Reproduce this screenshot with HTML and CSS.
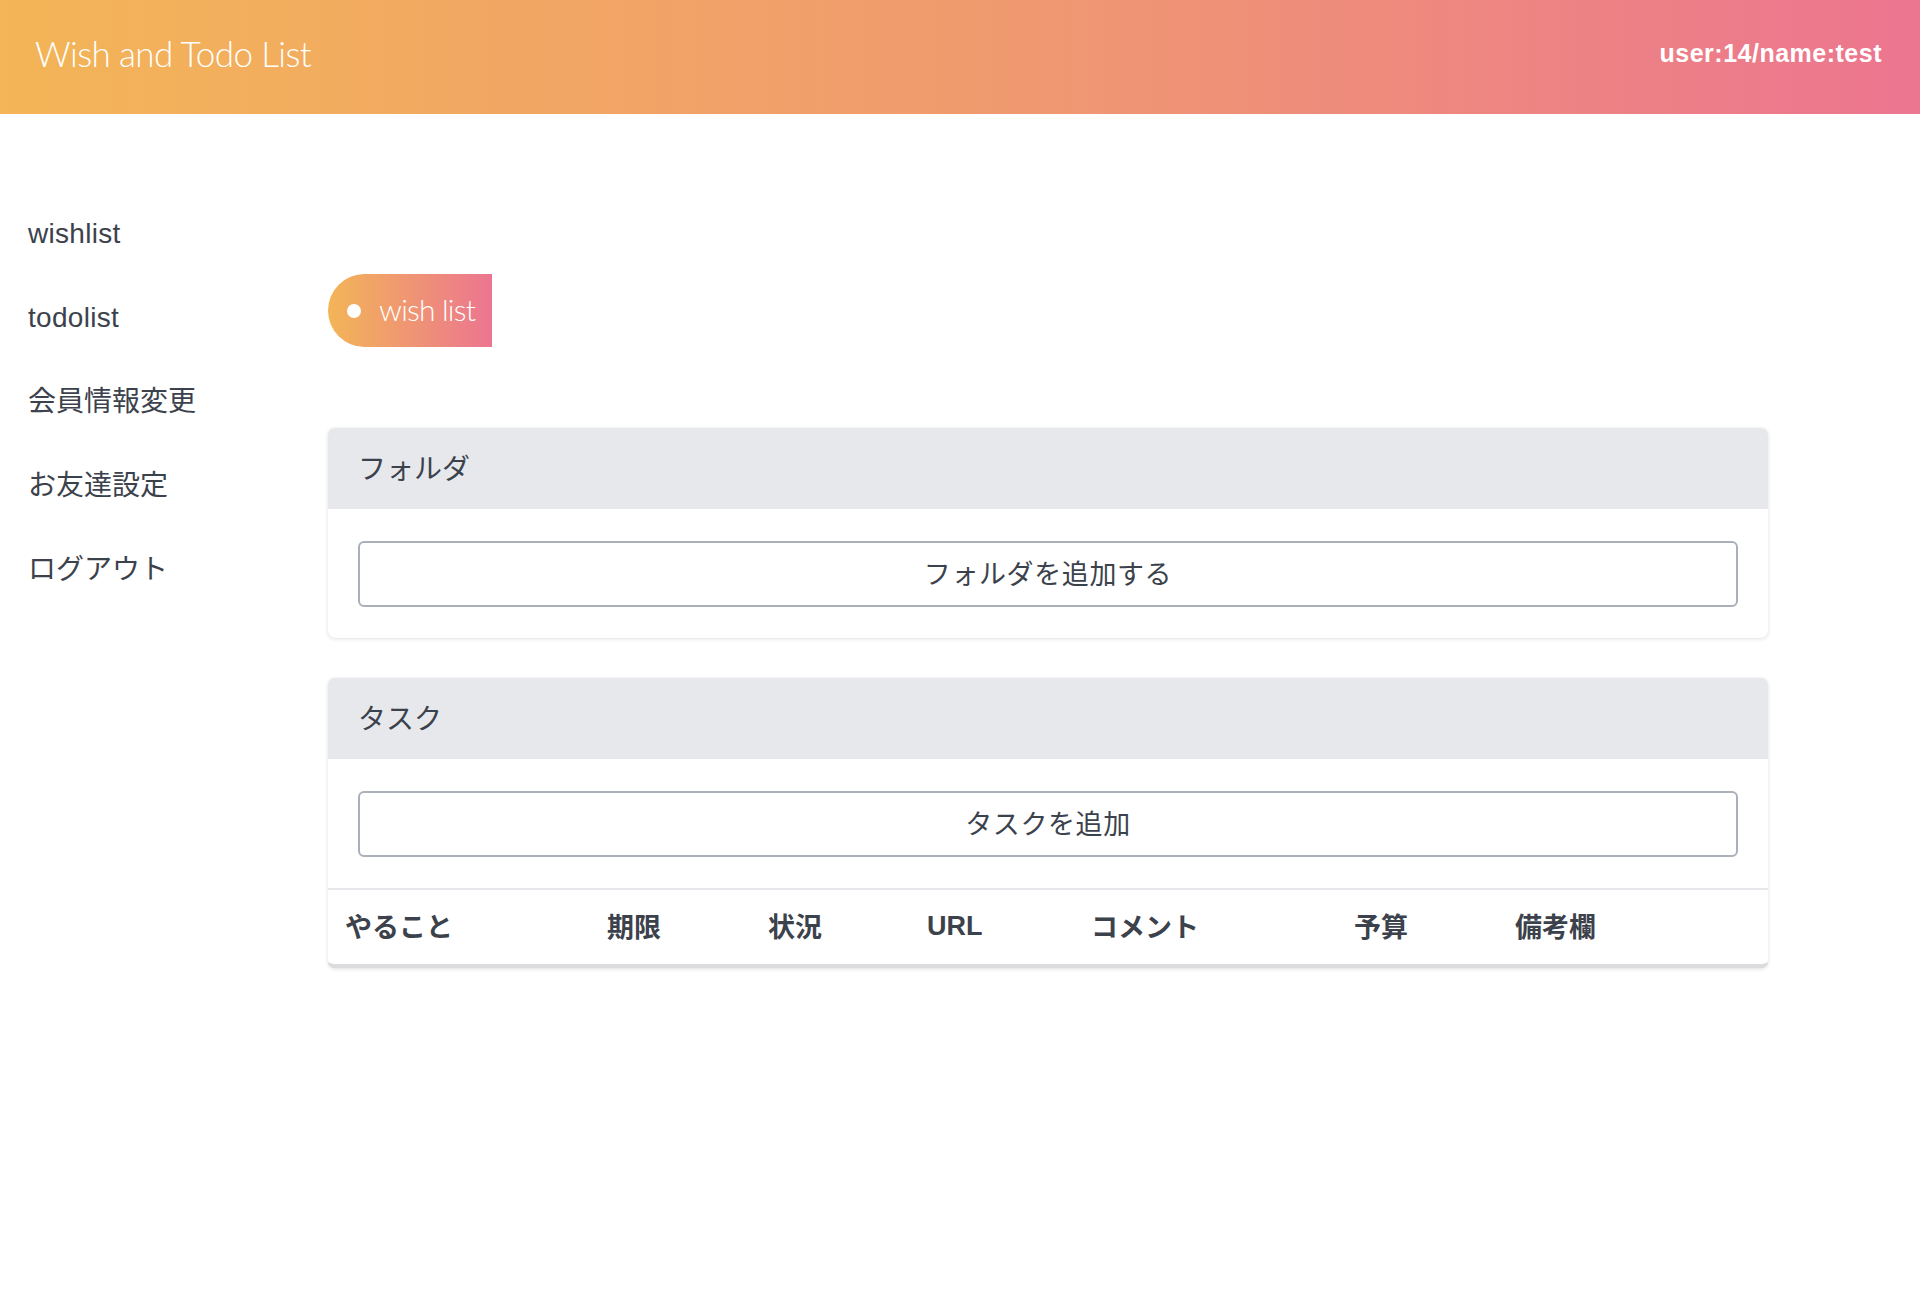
FILE: index.html
```html
<!DOCTYPE html>
<html lang="ja">
<head>
<meta charset="utf-8">
<title>Wish and Todo List</title>
<link rel="stylesheet" href="styles.css">
</head>
<body>
<header class="topbar">
  <div class="brand">Wish and Todo List</div>
  <div class="user">user:14/name:test</div>
</header>
<div class="layout">
  <nav class="sidebar">
    <a class="nav-item nav-latin" href="#">wishlist</a>
    <a class="nav-item nav-latin" href="#">todolist</a>
    <a class="nav-item" href="#">会員情報変更</a>
    <a class="nav-item" href="#">お友達設定</a>
    <a class="nav-item" href="#">ログアウト</a>
  </nav>
  <main class="content">
    <div class="pill"><span class="dot"></span><span class="pill-text">wish list</span></div>
    <section class="card card-folder">
      <div class="card-header">フォルダ</div>
      <div class="card-body">
        <button class="add-btn">フォルダを追加する</button>
      </div>
    </section>
    <section class="card card-task">
      <div class="card-header">タスク</div>
      <div class="card-body">
        <button class="add-btn">タスクを追加</button>
      </div>
      <table class="task-table">
        <thead>
          <tr>
            <th class="c1">やること</th>
            <th class="c2">期限</th>
            <th class="c3">状況</th>
            <th class="c4"><span class="latin-cell">URL</span></th>
            <th class="c5">コメント</th>
            <th class="c6">予算</th>
            <th class="c7">備考欄</th>
          </tr>
        </thead>
      </table>
    </section>
  </main>
</div>
</body>
</html>
```

FILE: styles.css
```css
* { box-sizing: border-box; }
html, body { margin: 0; padding: 0; background: #fff; }
body {
  font-family: "Liberation Sans", "Noto Sans CJK JP", sans-serif;
  color: #3c424c;
  width: 1920px;
  min-height: 1304px;
}
.topbar {
  height: 114px;
  display: flex;
  align-items: center;
  justify-content: space-between;
  padding: 0 38px 8px 35px;
  background: linear-gradient(90deg, #f3b557 0%, #f09b6e 50%, #ec7590 100%);
  color: #fff;
}
.brand {
  font-family: "Lato", "Liberation Sans", sans-serif;
  font-weight: 300;
  font-size: 35px;
  letter-spacing: -0.6px;
}
.user {
  font-size: 25px;
  font-weight: 700;
  letter-spacing: 0.5px;
}
.layout {
  display: flex;
}
.sidebar {
  width: 328px;
  flex: none;
  padding: 78px 0 0 28px;
  display: flex;
  flex-direction: column;
}
.nav-item {
  display: block;
  font-size: 28px;
  line-height: 40px;
  padding: 22px 0;
  color: #3c424c;
  text-decoration: none;
}
.nav-latin {
  letter-spacing: 0.3px;
}
.content {
  width: 1440px;
  padding-top: 160px;
}
.pill {
  display: inline-flex;
  align-items: center;
  height: 73px;
  width: 164px;
  border-radius: 37px 0 0 37px;
  background: linear-gradient(90deg, #f3b557 0%, #ec7590 100%);
  color: #fff;
  padding-left: 19px;
}
.dot {
  width: 14px;
  height: 14px;
  border-radius: 50%;
  background: #fff;
  flex: none;
}
.pill-text {
  font-family: "Lato", "Liberation Sans", sans-serif;
  font-weight: 300;
  font-size: 30px;
  margin-left: 18px;
  letter-spacing: -0.8px;
  padding-bottom: 3px;
}
.card {
  background: #fff;
  border-radius: 7px;
  box-shadow: 0 1px 4px rgba(10, 10, 10, 0.12), 0 0 1px rgba(10, 10, 10, 0.1);
  overflow: hidden;
}
.card-folder { margin-top: 81px; }
.card-task { margin-top: 40px; border-bottom: 4px solid #dcdcde; }
.card-header {
  height: 81px;
  background: #e7e8ec;
  display: flex;
  align-items: center;
  padding: 0 0 4px 30px;
  font-size: 28px;
  color: #3c424c;
}
.card-body {
  padding: 32px 30px 31px;
}
.add-btn {
  display: block;
  width: 100%;
  height: 66px;
  padding: 0 0 4px;
  background: #fff;
  border: 2px solid #aab0b9;
  border-radius: 6px;
  font-family: "Liberation Sans", "Noto Sans CJK JP", sans-serif;
  font-size: 27px;
  color: #3c424c;
  letter-spacing: 0.6px;
}
.task-table {
  width: 100%;
  border-collapse: collapse;
  border-top: 2px solid #e6e7eb;
  table-layout: fixed;
}
.task-table th {
  height: 75px;
  text-align: left;
  font-size: 27px;
  font-weight: 700;
  padding: 0 0 3px 17px;
  color: #3c424c;
}
.latin-cell {
  vertical-align: -2px;
}
.c1 { width: 262px; }
.c2 { width: 161px; }
.c3 { width: 159px; }
.c4 { width: 164px; }
.c5 { width: 263px; }
.c6 { width: 161px; }
```
